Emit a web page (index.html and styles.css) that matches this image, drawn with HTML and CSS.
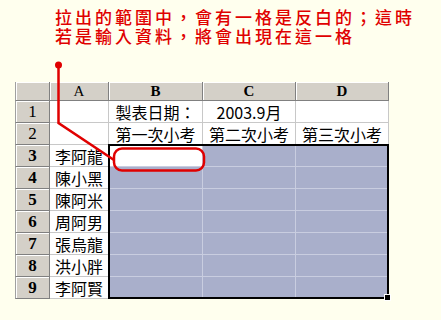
FILE: index.html
```html
<!DOCTYPE html>
<html lang="zh-Hant">
<head>
<meta charset="utf-8">
<link rel="stylesheet" href="styles.css">
</head>
<body>
<div class="page">
  <div class="title">
    <div class="line">拉出的範圍中，會有一格是反白的；這時</div>
    <div class="line">若是輸入資料，將會出現在這一格</div>
  </div>
  <div class="sheet-wrap">
    <div class="sheet">
      <div class="hd corner"></div>
      <div class="hd col">A</div>
      <div class="hd col sel">B</div>
      <div class="hd col sel">C</div>
      <div class="hd col sel">D</div>

      <div class="hd row">1</div>
      <div class="c"></div>
      <div class="c">製表日期：</div>
      <div class="c">2003.9月</div>
      <div class="c"></div>

      <div class="hd row">2</div>
      <div class="c"></div>
      <div class="c">第一次小考</div>
      <div class="c">第二次小考</div>
      <div class="c">第三次小考</div>

      <div class="hd row sel">3</div>
      <div class="c">李阿龍</div>
      <div class="c active"></div>
      <div class="c s"></div>
      <div class="c s"></div>

      <div class="hd row sel">4</div>
      <div class="c">陳小黑</div>
      <div class="c s"></div>
      <div class="c s"></div>
      <div class="c s"></div>

      <div class="hd row sel">5</div>
      <div class="c">陳阿米</div>
      <div class="c s"></div>
      <div class="c s"></div>
      <div class="c s"></div>

      <div class="hd row sel">6</div>
      <div class="c">周阿男</div>
      <div class="c s"></div>
      <div class="c s"></div>
      <div class="c s"></div>

      <div class="hd row sel">7</div>
      <div class="c">張烏龍</div>
      <div class="c s"></div>
      <div class="c s"></div>
      <div class="c s"></div>

      <div class="hd row sel">8</div>
      <div class="c">洪小胖</div>
      <div class="c s"></div>
      <div class="c s"></div>
      <div class="c s"></div>

      <div class="hd row sel">9</div>
      <div class="c">李阿賢</div>
      <div class="c s"></div>
      <div class="c s"></div>
      <div class="c s"></div>
    </div>
    <div class="selection"><span class="handle"></span></div>
  </div>
  <svg class="annot" width="441" height="320" viewBox="0 0 441 320">
    <circle cx="58.5" cy="65" r="3.5" fill="#e00000"/>
    <polyline points="58.5,65 58.5,123 114,160" fill="none" stroke="#e00000" stroke-width="2.5" stroke-linejoin="miter"/>
    <rect x="114" y="148.5" width="90" height="22" rx="8" ry="8" fill="none" stroke="#e00000" stroke-width="2.5"/>
  </svg>
</div>
</body>
</html>
```

FILE: styles.css
```css
html, body {
  margin: 0;
  padding: 0;
  background: #ffffee;
}
.page {
  position: relative;
  width: 441px;
  height: 320px;
  overflow: hidden;
}
.title {
  padding: 8px 0 0 55px;
  color: #e00000;
  font-family: "Noto Sans CJK TC", sans-serif;
  font-size: 17px;
  font-weight: 500;
  letter-spacing: 3px;
  height: 40px;
  display: flex;
  flex-direction: column;
}
.line {
  height: 19px;
  line-height: 17px;
  white-space: nowrap;
}
.sheet-wrap {
  position: relative;
  margin: 34px 0 0 15px;
  width: 374px;
}
.sheet {
  display: grid;
  grid-template-columns: 35px 59px 94px 93px 93px;
  grid-template-rows: 19px repeat(9, 22px);
}
.hd {
  box-sizing: border-box;
  background: #d4d0c8;
  border-right: 1px solid #808080;
  border-bottom: 1px solid #808080;
  box-shadow: inset 1px 1px 0 #ffffff;
  font-family: "Liberation Serif", serif;
  color: #000;
  display: flex;
  align-items: center;
  justify-content: center;
}
.col {
  font-size: 15px;
}
.row {
  font-size: 17px;
  border-left: 1px solid #a0a0a0;
}
.corner {
  border-left: 1px solid #a0a0a0;
}
.sel {
  font-weight: bold;
}
.c {
  box-sizing: border-box;
  background: #ffffff;
  border-right: 1px solid #c8c8c8;
  border-bottom: 1px solid #c8c8c8;
  font-family: "Noto Sans CJK TC", sans-serif;
  font-size: 16px;
  line-height: 20px;
  color: #000;
  display: flex;
  align-items: flex-end;
  justify-content: center;
  white-space: nowrap;
  overflow: hidden;
}
.c.s {
  background: #a9afcb;
  border-color: #c9cde0;
}
.c.active {
  background: #ffffff;
  border-right-color: #c9cde0;
  border-bottom-color: #c9cde0;
}
.selection {
  position: absolute;
  left: 93px;
  top: 62px;
  width: 281px;
  height: 155px;
  box-sizing: border-box;
  border: 2px solid #000;
  pointer-events: none;
}
.handle {
  position: absolute;
  right: -4px;
  bottom: -4px;
  width: 5px;
  height: 5px;
  background: #000;
  border: 1px solid #fff;
}
.annot {
  position: absolute;
  left: 0;
  top: 0;
}
```
